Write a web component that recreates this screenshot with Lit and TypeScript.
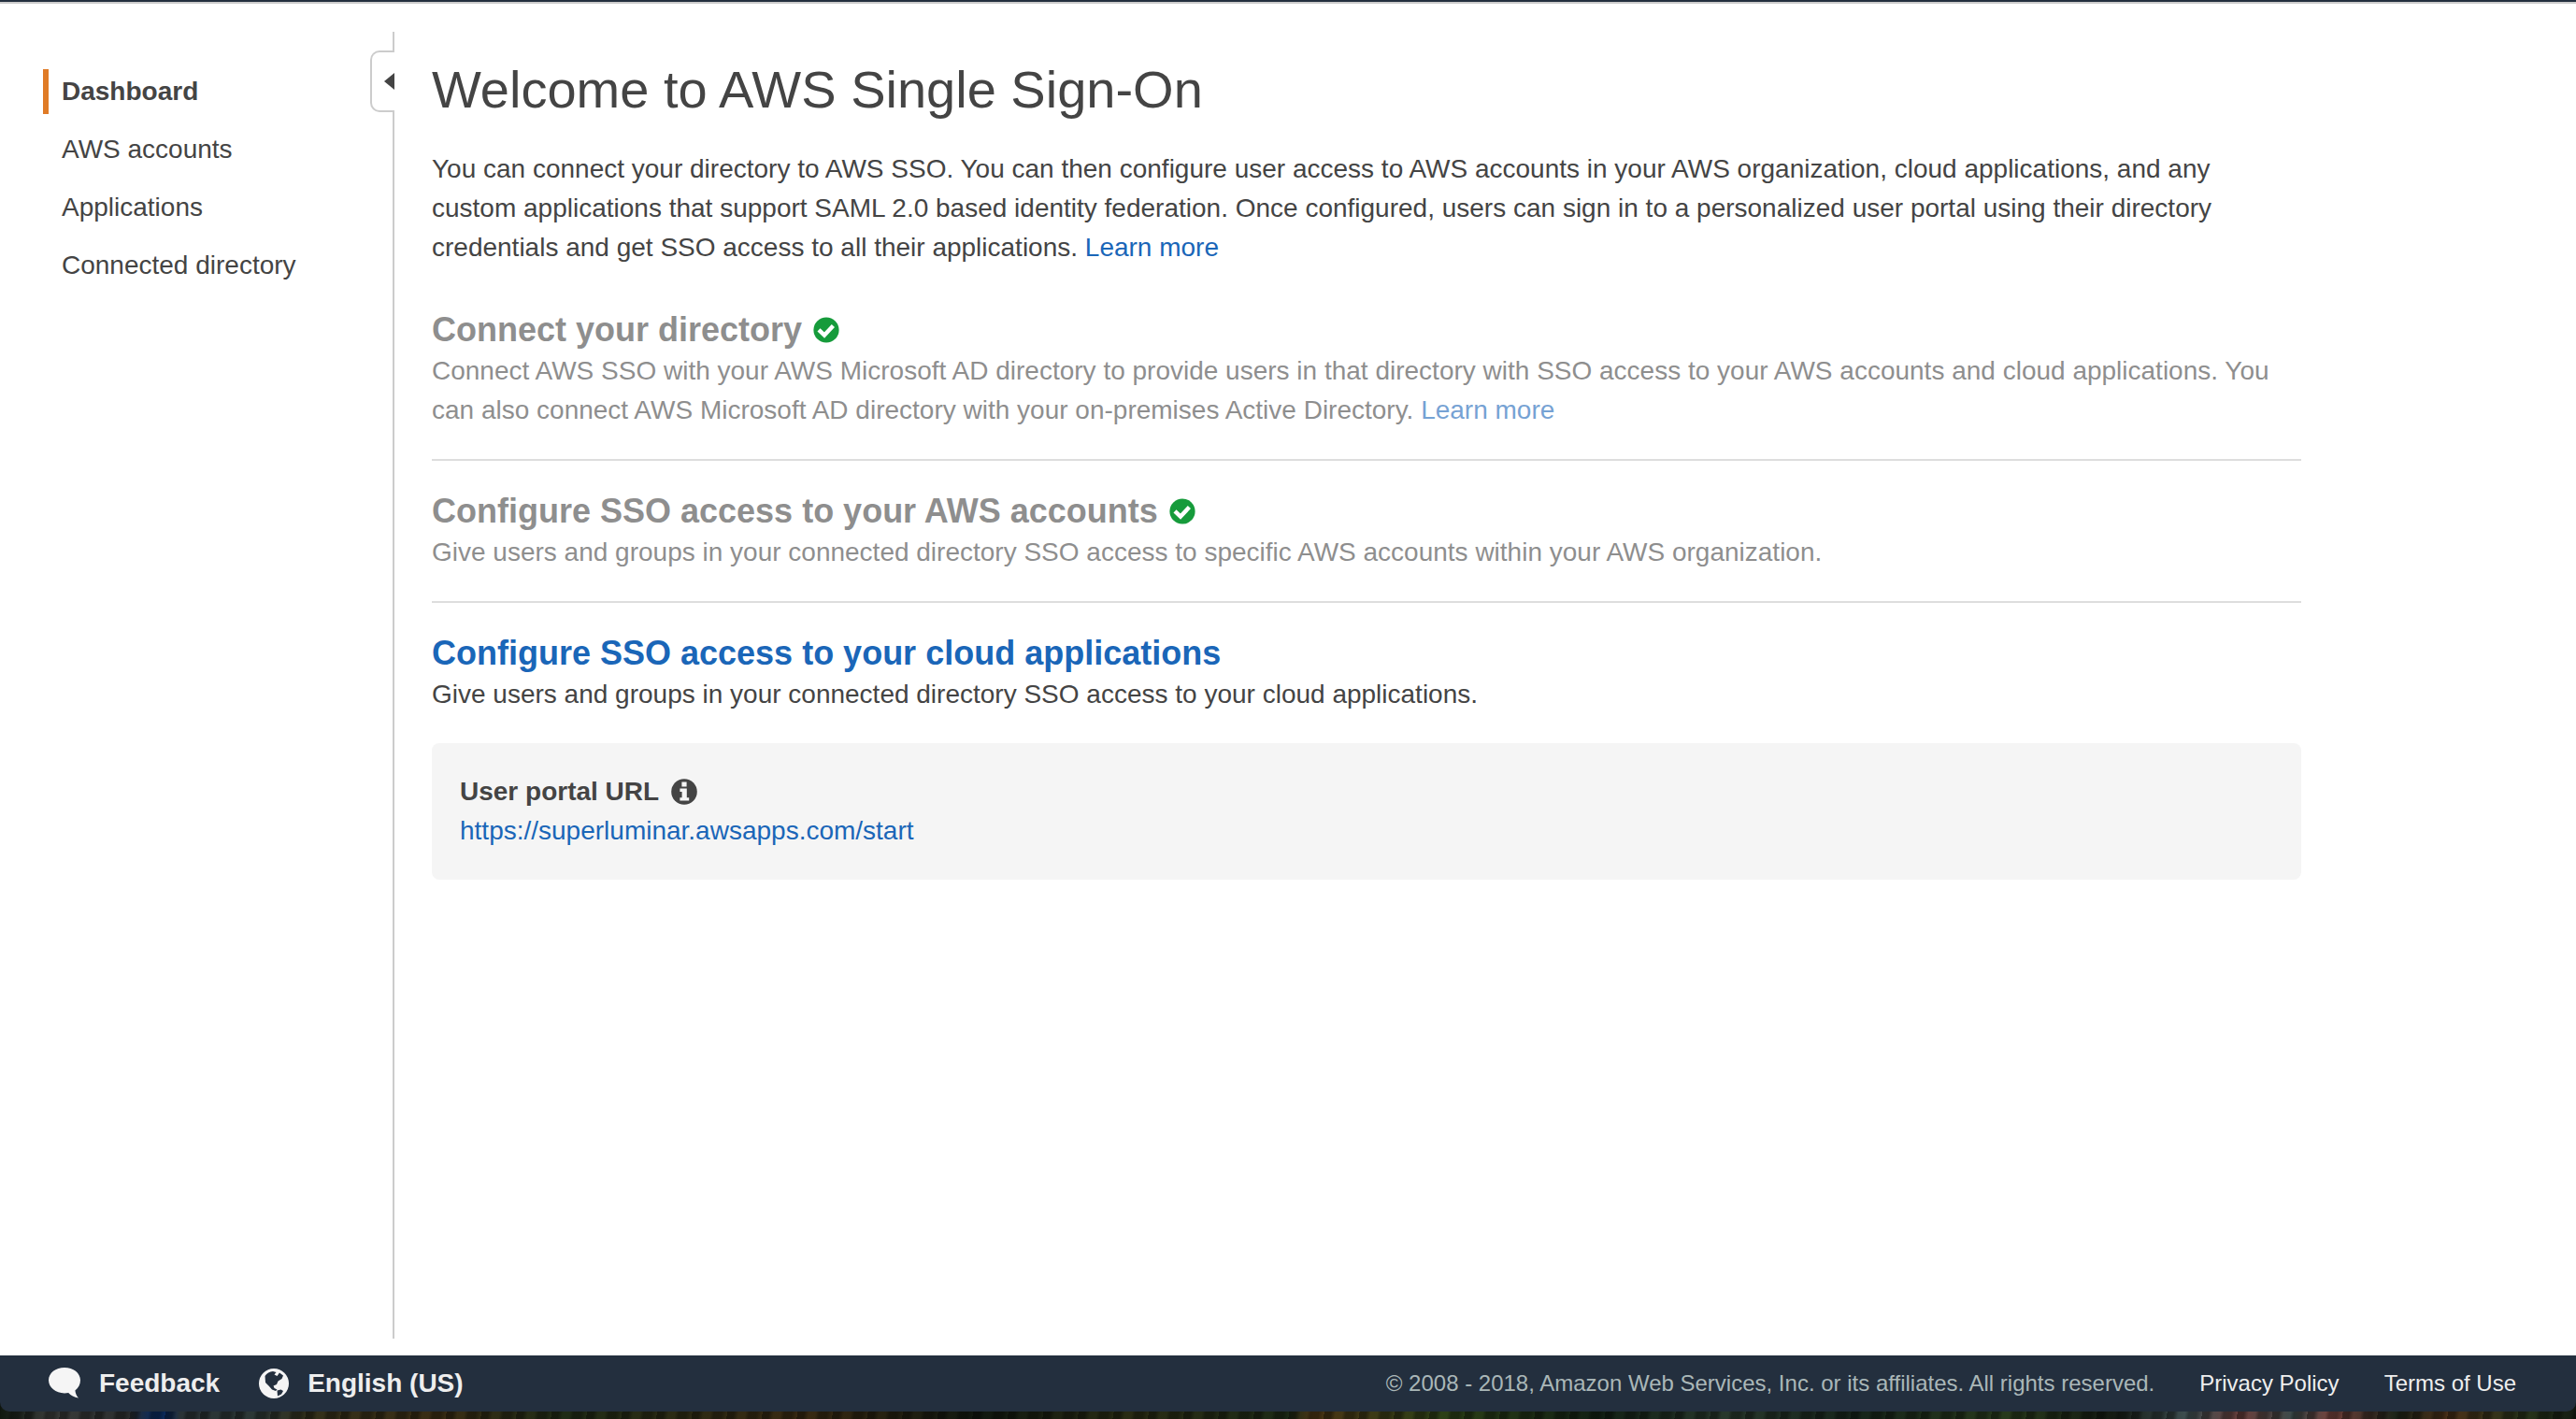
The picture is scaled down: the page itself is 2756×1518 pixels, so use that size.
import { LitElement, html, css, nothing } from "lit";
import { customElement, property } from "lit/decorators.js";

const checkIcon = html`<svg class="icon" viewBox="0 0 28 28" role="img" aria-label="Completed">
  <circle cx="14" cy="14" r="13.6" fill="#169b3b" />
  <path d="M6 13.800 L12 19.600 L21.400 9.600" fill="none" stroke="#fff" stroke-width="4.400" />
</svg>`;

const infoIcon = html`<svg class="icon" viewBox="0 0 28 28" aria-hidden="true">
  <circle cx="14" cy="14" r="13.8" fill="#444" />
  <path d="M11.4 3.6h5.2v4.8h-5.2zM9.4 10.6h7.400v9.6h2.4v3.4H9.4v-3.4h2.2v-6.2H9.4z" fill="#f5f5f5" />
</svg>`;

const bubbleIcon = html`<svg class="bubble" viewBox="0 0 34 34" aria-hidden="true">
  <path d="M17 0C26.400 0 34 5.800 34 13.600c0 4.600-2.200 8.400-5.600 10.800 0.400 3 1.400 5.600 3.600 8.200-4.600-0.800-8.200-2.600-10.800-5.500-1.300 0.200-2.800 0.300-4.200 0.300C7.600 27.400 0 21.400 0 13.600S7.600 0 17 0z" fill="#f5f5f5" />
</svg>`;

const globeIcon = html`<svg class="globe" viewBox="0 0 32 32" aria-hidden="true">
  <circle cx="16" cy="16" r="16" fill="#f5f5f5" />
  <path d="M6.500 8C8.500 5 11.500 3.200 15 3l3.500 1-2 2.500 3 1.500 2.500-3.500 4 3-1.500 3.500-4 2.500-1.500 3.500-3.500 1.500 1 2.500 3 1.500-1.500 1.500-4-1.500-3.500-4-3.500-3.500z" fill="#232f3e" />
  <path d="M19.500 23.500l4-1 2.500 1.500-2 3.500-4 2z" fill="#232f3e" />
</svg>`;

const shared = css`
  * { box-sizing: border-box; }
  a { color: #1a66b8; text-decoration: none; }
  a:hover { text-decoration: underline; }
  .icon { width: 28px; height: 28px; flex: none; }
`;

@customElement("side-nav")
class SideNav extends LitElement {
  static styles = [shared, css`
    :host { display: block; padding: 40px 0 0 46px; }
    ul { list-style: none; margin: 0; padding: 0; display: flex; flex-direction: column; gap: 14px; }
    .link {
      display: block; line-height: 48px; padding-left: 14px;
      border-left: 6px solid transparent; color: #444;
    }
    .current { border-left-color: #e07b26; font-weight: 700; }
  `];

  render() {
    const items = ["Dashboard", "AWS accounts", "Applications", "Connected directory"];
    return html`<nav aria-label="Main"><ul>
      ${items.map((label, i) => html`<li><a class=${i === 0 ? "link current" : "link"} href="#"
        aria-current=${i === 0 ? "page" : nothing}>${label}</a></li>`)}
    </ul></nav>`;
  }
}

@customElement("setup-step")
class SetupStep extends LitElement {
  @property() heading = "";
  @property({ type: Boolean, reflect: true }) done = false;

  static styles = [shared, css`
    :host { display: block; padding: 31px 0; border-bottom: 2px solid #ddd; }
    :host(:first-of-type) { padding-top: 44px; }
    :host(:last-of-type) { border-bottom: 0; }
    h2 { margin: 0; display: flex; align-items: center; gap: 12px; font-size: 36px; line-height: 46px; }
    .heading { color: #1a66b8; }
    .text { margin: 0; line-height: 42px; }
    :host([done]) .title, :host([done]) .text { opacity: 0.6; }
  `];

  render() {
    return html`
      <h2>${this.done
        ? html`<span class="title">${this.heading}</span>${checkIcon}`
        : html`<a class="heading" href="#">${this.heading}</a>`}</h2>
      <p class="text"><slot></slot></p>`;
  }
}

@customElement("page-footer")
class PageFooter extends LitElement {
  static styles = [shared, css`
    :host {
      display: block;
      background:
        repeating-linear-gradient(100deg, #0006 0 7px, #0000 12px 19px, #0005 23px 31px, #0000 37px),
        linear-gradient(90deg, #10180f 0, #3a3c3a 2%, #2b2e2e 5%, #0b2a5c 6%, #0b2a5c 6.500%,
          #2a3336 7%, #2c3836 10%, #33301a 12%, #3a2d14 17%, #1f2c16 22%, #3a2a12 31%, #101810 38%,
          #2a2c14 44%, #1c2a16 50%, #4a3414 51%, #2c4016 56%, #122014 62%, #28382c 67%, #16241a 72%,
          #283a1c 78%, #141a12 82%, #3f5052 85%, #6a3f3c 87%, #3c4a4a 89%, #74423c 90.500%,
          #1c2418 93%, #4a3018 95%, #28341a 98%, #141c12 100%);
    }
    .bar {
      display: flex; align-items: center; height: 60px; padding: 0 64px 0 52px;
      background: #232f3e; border-radius: 0 0 10px 10px; color: #aab7b8; font-size: 24px;
    }
    button {
      display: flex; align-items: center; margin: 0 42px 0 0; padding: 0; border: 0;
      background: none; color: #eee; font: inherit; font-size: 28px; font-weight: 700; cursor: pointer;
    }
    .bubble { width: 34px; height: 34px; margin-right: 20px; }
    .globe { width: 32px; height: 32px; margin-right: 20px; }
    .legal { display: flex; gap: 48px; margin-left: auto; }
    .legal a { color: #eee; }
    .strip { height: 8px; }
  `];

  render() {
    return html`
      <footer class="bar">
        <button type="button">${bubbleIcon}Feedback</button>
        <button type="button">${globeIcon}English (US)</button>
        <div class="legal">
          <span>© 2008 - 2018, Amazon Web Services, Inc. or its affiliates. All rights reserved.</span>
          <a href="#">Privacy Policy</a>
          <a href="#">Terms of Use</a>
        </div>
      </footer>
      <div class="strip"></div>`;
  }
}

@customElement("app-root")
class AppRoot extends LitElement {
  static styles = [shared, css`
    :host {
      display: flex; flex-direction: column; min-height: 100vh; background: #fff; color: #444;
      font-family: "Liberation Sans", Arial, sans-serif; font-size: 28px;
      border-top: 2px solid #232f3e; box-sizing: border-box;
    }
    .body {
      flex: 1; display: grid; grid-template-columns: 422px minmax(0, 2000px);
      column-gap: 40px; padding: 30px 40px 18px 0; border-top: 2px solid #ccc;
    }
    .side { display: grid; grid-template-columns: 1fr 26px; }
    .edge { display: flex; flex-direction: column; }
    .edge::before { content: ""; height: 20px; border-right: 2px solid #ccc; }
    .edge::after { content: ""; flex: 1; border-right: 2px solid #ccc; }
    .collapse {
      width: 26px; height: 66px; padding: 0; border: 2px solid #ccc; border-right: 0;
      border-radius: 10px 0 0 10px; background: #fff; cursor: pointer;
      display: flex; align-items: center; justify-content: flex-end;
    }
    .arrow { width: 11px; height: 18px; }
    h1 { margin: 0; font-size: 56px; font-weight: 400; line-height: 64px; }
    .content { padding-top: 30px; }
    .intro { margin: 32px 0 0; line-height: 42px; }
    .portal { background: #f5f5f5; border-radius: 8px; padding: 31px 30px; line-height: 42px; }
    .label { display: flex; align-items: center; gap: 13px; font-weight: 700; }
  `];

  render() {
    return html`
      <div class="body">
        <div class="side">
          <side-nav></side-nav>
          <div class="edge">
            <button class="collapse" type="button" aria-label="Collapse navigation">
              <svg class="arrow" viewBox="0 0 11 18" aria-hidden="true"><path d="M11 0v18L0 9z" fill="#444" /></svg>
            </button>
          </div>
        </div>
        <main class="content">
          <h1>Welcome to AWS Single Sign-On</h1>
          <p class="intro">You can connect your directory to AWS SSO. You can then configure user access to AWS accounts in your AWS organization, cloud applications, and any custom applications that support SAML 2.0 based identity federation. Once configured, users can sign in to a personalized user portal using their directory credentials and get SSO access to all their applications. <a href="#">Learn more</a></p>
          <setup-step done heading="Connect your directory">Connect AWS SSO with your AWS Microsoft AD directory to provide users in that directory with SSO access to your AWS accounts and cloud applications. You can also connect AWS Microsoft AD directory with your on-premises Active Directory. <a href="#">Learn more</a></setup-step>
          <setup-step done heading="Configure SSO access to your AWS accounts">Give users and groups in your connected directory SSO access to specific AWS accounts within your AWS organization.</setup-step>
          <setup-step heading="Configure SSO access to your cloud applications">Give users and groups in your connected directory SSO access to your cloud applications.</setup-step>
          <section class="portal">
            <div class="label">User portal URL ${infoIcon}</div>
            <a href="#">https://superluminar.awsapps.com/start</a>
          </section>
        </main>
      </div>
      <page-footer></page-footer>`;
  }
}
